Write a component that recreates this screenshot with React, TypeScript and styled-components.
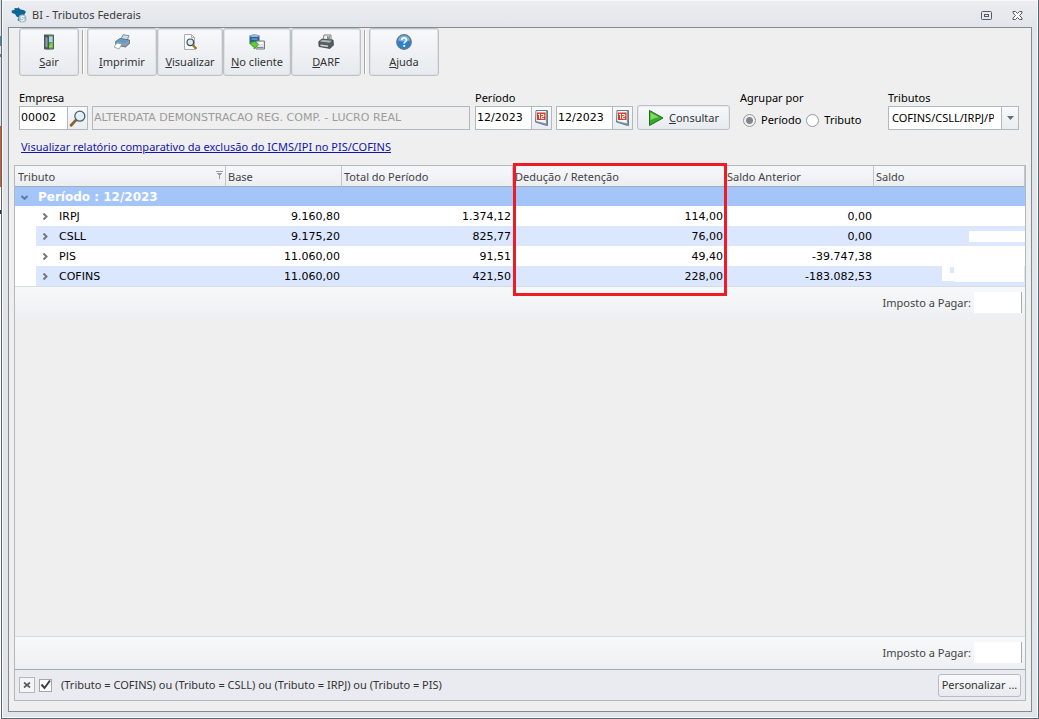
import React from "react";
import styled, { createGlobalStyle } from "styled-components";

const ui = `"Segoe UI", "Noto Sans", "Open Sans", sans-serif`;
const data = `Verdana, "DejaVu Sans", sans-serif`;

const GlobalStyle = createGlobalStyle`
  * { box-sizing: border-box; }
  body { margin: 0; background: #f4f6f7; font: 11px/16px ${ui}; color: #1e1e1e; }
  button, input, select { font: inherit; color: inherit; margin: 0; }
`;

const Desktop = styled.div`
  display: flex;
  min-height: 100vh;
  background: linear-gradient(#dfe3e8 0 36px, #4b90a8 36px 46px, #e4e7ea 46px 54px, #777 54px 57px, #dfe3e8 57px 126px, #d9582b 126px 187px, #ffffff 187px 210px, #333 210px 214px, #fff 214px);
  padding-left: 1px;
`;
const Window = styled.main`
  flex: 1;
  min-width: 0;
  display: flex;
  flex-direction: column;
  border: 1px solid #5d6772;
  border-top: 0;
  box-shadow: inset 0 0 0 1px #f7f9fa;
  background: linear-gradient(#ecedf1, #e1e5e9 28px);
  background-clip: padding-box;
  padding: 0 6px 6px;
`;
const TitleBar = styled.header`
  display: flex;
  align-items: center;
  height: 27px;
  padding: 3px 1px 0 3px;
  gap: 5px;
  color: #3b3b3b;
`;
const Title = styled.h1`
  flex: 1;
  margin: 0;
  font: inherit;
`;
const WindowButton = styled.button`
  display: flex;
  width: 26px;
  padding: 1px 7px 0;
  border: 0;
  background: none;
`;
const Client = styled.div`
  flex: 1;
  display: flex;
  flex-direction: column;
  border: 1px solid #838b93;
  background: #efefef;
`;
const Toolbar = styled.nav`
  display: flex;
  padding-left: 10px;
`;
const ToolButton = styled.button<{ $width: number }>`
  width: ${(p) => p.$width}px;
  height: 48px;
  display: flex;
  flex-direction: column;
  align-items: center;
  justify-content: space-between;
  padding: 5px 0;
  border: 1px solid #bcc1c8;
  border-radius: 3px;
  background: linear-gradient(#f7f9fb, #e7eaee);
  box-shadow: inset 0 0 0 1px #dfe3e7;
  color: #333;
  white-space: nowrap;
`;
const Divider = styled.span`
  width: 2px;
  margin: 2px 3px 2px 3px;
  border-left: 1px solid #a5a5a5;
  border-right: 1px solid #fff;
`;
const Filters = styled.form`
  display: flex;
  align-items: flex-start;
  padding: 14px 12px 0 10px;
`;
const Field = styled.div<{ $grow?: boolean; $width?: number; $end?: number }>`
  flex: ${(p) => (p.$grow ? "1 1 0" : "none")};
  width: ${(p) => (p.$width ? `${p.$width}px` : "auto")};
  min-width: 0;
  margin: 0 ${(p) => p.$end ?? 0}px 0 0;
  padding: 0;
  border: 0;
  color: #000;
`;
const FieldLabel = styled.label`
  display: block;
  height: 16px;
  padding: 0;
`;
const Controls = styled.div<{ $gap: number; $indent?: number }>`
  display: flex;
  gap: ${(p) => p.$gap}px;
  padding-left: ${(p) => p.$indent ?? 0}px;
`;
const InputBox = styled.div<{ $width?: number }>`
  display: flex;
  flex: ${(p) => (p.$width ? "none" : "1")};
  width: ${(p) => (p.$width ? `${p.$width}px` : "auto")};
  height: 24px;
  border: 1px solid #b1b8c0;
  background: #fff;
`;
const TextInput = styled.input`
  flex: 1;
  width: 0;
  min-width: 0;
  border: 0;
  padding: 0 0 0 1px;
  background: transparent;
  font-family: ${data};
  color: #000;
  &:disabled { background: #efefef; color: #9b9b9b; }
`;
const InputButton = styled.button<{ $width: number }>`
  width: ${(p) => p.$width}px;
  display: grid;
  place-items: center;
  padding: 0;
  border: 0;
  border-left: 1px solid #b1b8c0;
  background: linear-gradient(#f7f9fb, #e9edf0);
`;
const QueryButton = styled.button`
  display: flex;
  align-items: center;
  gap: 5px;
  width: 93px;
  height: 25px;
  margin: 15px 10px 0 4px;
  padding: 0 0 0 10px;
  border: 1px solid #bcc1c8;
  border-radius: 3px;
  background: linear-gradient(#f7f9fb, #e7eaee);
  box-shadow: inset 0 0 0 1px #e6eaed;
  color: #333;
`;
const Choice = styled.label`
  display: flex;
  align-items: center;
  gap: 5px;
  margin-top: 6px;
`;
const Radio = styled.input`
  appearance: none;
  width: 13px;
  height: 13px;
  border: 1px solid #9299a1;
  border-radius: 50%;
  background: #fff;
  &:checked { background: radial-gradient(circle, #82868c 0 3px, #eef0f2 4px); }
`;
const SelectBox = styled.div`
  position: relative;
  height: 24px;
`;
const Select = styled.select`
  appearance: none;
  width: 100%;
  height: 24px;
  padding: 0 24px 1px 3px;
  border: 1px solid #b1b8c0;
  border-radius: 0;
  background: #fff;
  color: #000;
`;
const SelectArrow = styled.span`
  position: absolute;
  right: 1px;
  top: 1px;
  bottom: 1px;
  width: 17px;
  display: grid;
  place-items: center;
  border-left: 1px solid #b1b8c0;
  background: linear-gradient(#f7f9fb, #e9edf0);
  pointer-events: none;
`;
const ReportLink = styled.a`
  align-self: flex-start;
  margin: 9px 0 0 12px;
  color: #1414ae;
`;
const Grid = styled.section`
  position: relative;
  flex: 1;
  display: flex;
  flex-direction: column;
  margin: 10px 5px 10px;
  border: 1px solid #b1b8c0;
`;
const Table = styled.table`
  width: 100%;
  table-layout: fixed;
  border-collapse: separate;
  border-spacing: 0;
`;
const HeadCell = styled.th`
  height: 21px;
  padding: 1px 2px 0 3px;
  border-right: 1px solid #c2c6cc;
  border-bottom: 1px solid #a3abb5;
  background: linear-gradient(#f7f8fa, #ebeef1);
  font-weight: 400;
  text-align: left;
  color: #444;
  svg { float: right; margin-top: 2px; }
  & + & { padding-left: 2px; }
`;
const GroupCell = styled.th`
  height: 19px;
  padding: 1px 0 0 6px;
  background: #a3c5fa;
  color: #fff;
  font: 700 12px/16px ${data};
  text-align: left;
  svg { margin-right: 10px; }
`;
const Row = styled.tr<{ $shaded: boolean }>`
  background: ${(p) => (p.$shaded ? `linear-gradient(90deg, #fff 21px, #dae7fe 21px)` : "#fff")};
`;
const NameCell = styled.th`
  height: 20px;
  padding: 1px 0 0 27px;
  font: 400 11px/16px ${data};
  text-align: left;
  color: #000;
  svg { margin-right: 10px; }
`;
const NumberCell = styled.td`
  position: relative;
  padding: 1px 2px 0 0;
  font: 11px/16px ${data};
  text-align: right;
  color: #000;
`;
const Mask = styled.span<{ $top: number; $right: number; $width: number; $height: number }>`
  position: absolute;
  top: ${(p) => p.$top}px;
  right: ${(p) => p.$right}px;
  width: ${(p) => p.$width}px;
  height: ${(p) => p.$height}px;
  background: #fff;
`;
const TotalBar = styled.div`
  display: flex;
  align-items: center;
  justify-content: flex-end;
  gap: 3px;
  height: 33px;
  padding: 0 3px 1px 0;
  border-top: 1px solid #d6dae1;
  background: linear-gradient(#f7f8fa, #edf0f2);
  color: #444;
`;
const TotalValue = styled.output`
  width: 48px;
  height: 21px;
  border-right: 1px solid #a3abb5;
  background: #fff;
`;
const Space = styled.div`
  flex: 1;
`;
const FilterBar = styled.footer`
  display: flex;
  align-items: center;
  height: 31px;
  padding: 0 4px;
  border-top: 1px solid #a3abb5;
  background: #e9ebf0;
  color: #333;
`;
const ClearButton = styled.button`
  width: 16px;
  height: 16px;
  display: grid;
  place-items: center;
  padding: 0;
  border: 1px solid #b1b8c0;
  background: #f3f5f7;
`;
const FilterToggle = styled.label`
  flex: 1;
  display: flex;
  align-items: center;
  gap: 9px;
  margin-left: 4px;
`;
const Check = styled.span`
  position: relative;
  width: 13px;
  height: 13px;
  svg { position: absolute; left: 0; top: -1px; pointer-events: none; }
`;
const CheckInput = styled.input`
  appearance: none;
  display: block;
  width: 13px;
  height: 13px;
  border: 1px solid #9ea6af;
  background: #fff;
`;
const CustomizeButton = styled.button`
  width: 83px;
  height: 23px;
  padding: 0;
  border: 1px solid #b7bcc4;
  border-radius: 3px;
  background: linear-gradient(#f9fafc, #e7ebee);
  white-space: nowrap;
`;
const Highlight = styled.div`
  position: absolute;
  left: 498px;
  top: -3px;
  width: 214px;
  height: 133px;
  border: 3px solid #ee1c24;
  pointer-events: none;
`;

const Icon = ({ size = 16, children }: { size?: number; children: React.ReactNode }) => (
  <svg width={size} height={size} viewBox="0 0 16 16" fill="none" aria-hidden="true">{children}</svg>
);
const BrazilIcon = () => (
  <Icon>
    <path d="M.5 3.500L3.500 3V1l3 .3 1-1 1.500 2 4 1 2 1.500-1.500 2.500v2.500l-3 1.500-2 3.200-2-1.500 1-2.500-2-1-1.500-2.500-3-1z" fill="#0c6594" />
    <circle cx="11.500" cy="11.500" r="4" fill="#a3bccb" />
    <path d="M13.300 10c-1-1-3.300-1-3.300.4s3.200.8 3.200 2.200-2.200 1.500-3.400.4" stroke="#edf5fa" strokeWidth="1.200" />
  </Icon>
);
const DoorIcon = () => (
  <Icon>
    <path d="M3.500 1h9v14h-9z" fill="#55ab48" stroke="#55595d" />
    <path d="M8 2.500h3.500V8H8z" fill="#a7d9e9" />
    <path d="M8 12l3.500-4v5.500H8z" fill="#8fd24d" />
    <path d="M3 .5l5 1.500v13.500L3 14.500z" fill="#4b555c" />
    <path d="M4.500 3l2 .6v9.800l-2-.5z" fill="#93a0a7" />
  </Icon>
);
const PrinterIcon = () => (
  <Icon>
    <path d="M7 5l2-4.300 6 1-2 5z" fill="#c9deee" stroke="#65798a" strokeWidth=".8" />
    <path d="M1.500 7.500L6 4.500l9.500 1.500v3.500l-4 3.500-9.500-2z" fill="#8f9ba8" stroke="#56636f" strokeWidth=".8" />
    <path d="M2.500 7.500l4-2 7 1.200-3.500 2.500z" fill="#4fa0de" />
    <path d="M3 9l5 1-3 5-5-2z" fill="#fff" stroke="#8a98a6" strokeWidth=".8" />
  </Icon>
);
const PreviewIcon = () => (
  <Icon>
    <path d="M2.500.5h7l3 3v12h-10z" fill="#fff" stroke="#a7adb3" />
    <path d="M9.500.5v3h3" stroke="#a7adb3" />
    <path d="M10.800 11.200l3.700 3.700" stroke="#b17323" strokeWidth="2.200" />
    <circle cx="8.300" cy="8.300" r="3.300" fill="#d5edf5" stroke="#424c55" strokeWidth="1.200" />
  </Icon>
);
const ClientIcon = () => (
  <Icon>
    <path d="M.5 1.500q5-2 10 0V10q-5 1.500-10 0z" fill="#2c5f94" />
    <path d="M1 1.500q4.500-1.700 9 0v1q-4.500 1-9 0z" fill="#9cb8d4" />
    <path d="M2.500 4.200h6v1.800h-6z" fill="#5594ce" />
    <path d="M7 7h8.500v8H7z" fill="#dfe3e6" stroke="#737c83" />
    <path d="M10 9h4" stroke="#fff" strokeWidth="2" />
    <path d="M8 13.500h6.500" stroke="#838b91" />
    <path d="M1.500 8H5V6.500L9.500 10.800 5 15v-2.500C3 12.500 1.500 11 1.500 8z" fill="#5dce33" stroke="#2c8820" strokeWidth=".7" />
  </Icon>
);
const TaxPrinterIcon = () => (
  <Icon>
    <path d="M5 6l1-5h7v6z" fill="#f7f5e8" stroke="#5e6265" strokeWidth=".8" />
    <path d="M9 2h3v3H9z" fill="#5c9ac9" />
    <path d="M10 2h1.500v1.500H10z" fill="#e4ad46" />
    <path d="M.8 7.500L4 5l11 1 .5 5-3.500 3.500-11-2z" fill="#555c62" stroke="#32373b" strokeWidth=".7" />
    <path d="M1.500 7.500L4.500 5.800l9.500 1-2.500 2z" fill="#aeb3b7" />
    <path d="M2.500 10.500l7.500 1v1.500l-7.500-1z" fill="#d5d8db" />
  </Icon>
);
const HelpIcon = () => (
  <Icon>
    <circle cx="8" cy="8" r="7.300" fill="#2f80c4" stroke="#6e7880" strokeWidth="1.200" />
    <path d="M2 6.500a6 5 0 0112 0q-6 2-12 0z" fill="#75b1df" />
    <path d="M5.800 6.200c0-3 4.700-2.900 4.700-.2 0 1.700-2.300 1.600-2.300 3.500" stroke="#fff" strokeWidth="1.700" />
    <path d="M7.300 10.900h1.900v1.900H7.300z" fill="#fff" />
  </Icon>
);
const SearchIcon = () => (
  <Icon size={17}>
    <path d="M6.500 9.500L2 14.300" stroke="#8f6026" strokeWidth="2.600" strokeLinecap="round" />
    <circle cx="10.200" cy="5.800" r="4.700" fill="#dbf0fa" stroke="#4e5b68" strokeWidth="1.200" />
    <path d="M7.500 5.500c.3-2 1.700-2.700 3.200-2.500" stroke="#fff" strokeWidth="1.300" />
  </Icon>
);
const CalendarIcon = () => (
  <svg width="13" height="16" viewBox="0 0 13 16" fill="none" aria-hidden="true">
    <path d="M1 .5h11.500v15L10 15 .5 12z" fill="#8799aa" stroke="#677a8d" />
    <path d="M1.500 1h9.300v12.300L1.200 11z" fill="#f5f7fa" />
    <path d="M2 2.500h8.500V10H2z" fill="#d63d29" />
    <path d="M3 4.800l1.500-.8v4.800M6 4.500h2.800v1.900H6.500v2H9" stroke="#fff" />
  </svg>
);
const PlayIcon = () => (
  <Icon>
    <path d="M1.500.5L15 8 1.500 15.500z" fill="#39a824" stroke="#1f6f19" />
    <path d="M2.500 2.500L11 7.200q-5 .5-8.500 3z" fill="#83d963" />
  </Icon>
);
const Chevron = ({ open = false }: { open?: boolean }) => (
  <svg width="7" height="7" viewBox="0 0 7 7" fill="none" aria-hidden="true">
    <path d={open ? "M0.500 2l3 2.800L6.500 2" : "M1.500 .5l3 3L1.500 6.500"} stroke={open ? "#65799a" : "#74787e"} strokeWidth="2" />
  </svg>
);

const tools = [
  { key: "S", rest: "air", width: 60, icon: <DoorIcon />, divided: true },
  { key: "I", rest: "mprimir", width: 70, icon: <PrinterIcon /> },
  { key: "V", rest: "isualizar", width: 66, icon: <PreviewIcon /> },
  { key: "N", rest: "o cliente", width: 68, icon: <ClientIcon /> },
  { key: "D", rest: "ARF", width: 70, icon: <TaxPrinterIcon />, divided: true },
  { key: "A", rest: "juda", width: 70, icon: <HelpIcon /> },
];

const rows = [
  { name: "IRPJ", values: ["9.160,80", "1.374,12", "114,00", "0,00"] },
  { name: "CSLL", values: ["9.175,20", "825,77", "76,00", "0,00"] },
  { name: "PIS", values: ["11.060,00", "91,51", "49,40", "-39.747,38"] },
  { name: "COFINS", values: ["11.060,00", "421,50", "228,00", "-183.082,53"] },
];

const masks: Record<string, React.ReactNode> = {
  CSLL: <Mask $top={5} $right={0} $width={56} $height={11} />,
  COFINS: (
    <>
      <Mask $top={0} $right={75} $width={8} $height={15} />
      <Mask $top={7} $right={71} $width={4} $height={8} />
      <Mask $top={0} $right={71} $width={4} $height={1} />
      <Mask $top={0} $right={1} $width={70} $height={16} />
    </>
  ),
};

const MonthInput = ({ id, label }: { id: string; label: string }) => (
  <InputBox $width={77}>
    <TextInput id={id} aria-label={label} defaultValue="12/2023" />
    <InputButton type="button" $width={20} aria-label="Abrir calendário"><CalendarIcon /></InputButton>
  </InputBox>
);

const Total = () => (
  <TotalBar>
    <span>Imposto a Pagar:</span>
    <TotalValue />
  </TotalBar>
);

export default function App() {
  return (
    <Desktop>
      <GlobalStyle />
      <Window>
        <TitleBar>
          <BrazilIcon />
          <Title>BI - Tributos Federais</Title>
          <WindowButton aria-label="Maximizar">
            <svg width="12" height="10" viewBox="0 0 12 10" fill="none">
              <rect x=".5" y=".5" width="10" height="8" rx="1" stroke="#535c64" />
              <rect x="3.500" y="3.500" width="4" height="2" stroke="#535c64" />
            </svg>
          </WindowButton>
          <WindowButton aria-label="Fechar">
            <svg width="12" height="10" viewBox="0 0 12 10" fill="none">
              <path d="M1 .5h2.500l2 2 2-2H10V2L7.500 4.500 10 7v1.500H7.500l-2-2-2 2H1V7l2.500-2.500L1 2z" fill="#fff" stroke="#535c64" />
            </svg>
          </WindowButton>
        </TitleBar>
        <Client>
          <Toolbar>
            {tools.map((t) => (
              <React.Fragment key={t.key}>
                <ToolButton $width={t.width}>
                  {t.icon}
                  <span><u>{t.key}</u>{t.rest}</span>
                </ToolButton>
                {t.divided && <Divider />}
              </React.Fragment>
            ))}
          </Toolbar>
          <Filters onSubmit={(e) => e.preventDefault()}>
            <Field $grow $end={5}>
              <FieldLabel htmlFor="empresa">Empresa</FieldLabel>
              <Controls $gap={4}>
                <InputBox $width={69}>
                  <TextInput id="empresa" defaultValue="00002" />
                  <InputButton type="button" $width={20} aria-label="Pesquisar empresa"><SearchIcon /></InputButton>
                </InputBox>
                <InputBox>
                  <TextInput disabled aria-label="Nome da empresa" defaultValue="ALTERDATA DEMONSTRACAO REG. COMP. - LUCRO REAL" />
                </InputBox>
              </Controls>
            </Field>
            <Field>
              <FieldLabel htmlFor="inicio">Período</FieldLabel>
              <Controls $gap={4}>
                <MonthInput id="inicio" label="Período inicial" />
                <MonthInput id="fim" label="Período final" />
              </Controls>
            </Field>
            <QueryButton type="submit">
              <PlayIcon />
              <span><u>C</u>onsultar</span>
            </QueryButton>
            <Field as="fieldset" $width={148}>
              <FieldLabel as="legend">Agrupar por</FieldLabel>
              <Controls $gap={5} $indent={3}>
                <Choice><Radio type="radio" name="agrupar" defaultChecked />Período</Choice>
                <Choice><Radio type="radio" name="agrupar" />Tributo</Choice>
              </Controls>
            </Field>
            <Field $width={131}>
              <FieldLabel htmlFor="tributos">Tributos</FieldLabel>
              <SelectBox>
                <Select id="tributos"><option>COFINS/CSLL/IRPJ/PIS</option></Select>
                <SelectArrow><svg width="7" height="4" viewBox="0 0 7 4"><path d="M0 0h7L3.500 4z" fill="#666e77" /></svg></SelectArrow>
              </SelectBox>
            </Field>
          </Filters>
          <ReportLink href="#relatorio">Visualizar relatório comparativo da exclusão do ICMS/IPI no PIS/COFINS</ReportLink>
          <Grid>
            <Table>
              <colgroup>
                <col style={{ width: 211 }} />
                <col style={{ width: 116 }} />
                <col style={{ width: 171 }} />
                <col style={{ width: 212 }} />
                <col style={{ width: 149 }} />
                <col />
              </colgroup>
              <thead>
                <tr>
                  <HeadCell>
                    Tributo
                    <svg width="7" height="8" viewBox="0 0 7 8" fill="none"><path d="M0 .5h7M1 2.500h5M2 3.500h3M3.500 3.500V8" stroke="#939ba4" /></svg>
                  </HeadCell>
                  <HeadCell>Base</HeadCell>
                  <HeadCell>Total do Período</HeadCell>
                  <HeadCell>Dedução / Retenção</HeadCell>
                  <HeadCell>Saldo Anterior</HeadCell>
                  <HeadCell>Saldo</HeadCell>
                </tr>
              </thead>
              <tbody>
                <tr><GroupCell colSpan={6}><Chevron open />Período : 12/2023</GroupCell></tr>
                {rows.map((r, i) => (
                  <Row key={r.name} $shaded={i % 2 === 1}>
                    <NameCell scope="row"><Chevron />{r.name}</NameCell>
                    {r.values.map((v, n) => <NumberCell key={n}>{v}</NumberCell>)}
                    <NumberCell>{masks[r.name]}</NumberCell>
                  </Row>
                ))}
              </tbody>
            </Table>
            <Total />
            <Space />
            <Total />
            <FilterBar>
              <ClearButton aria-label="Limpar filtro">
                <svg width="8" height="6" viewBox="0 0 8 6"><path d="M1 .5l6 5M7 .5l-6 5" stroke="#555b61" strokeWidth="1.700" /></svg>
              </ClearButton>
              <FilterToggle>
                <Check>
                  <CheckInput type="checkbox" defaultChecked />
                  <svg width="13" height="13" viewBox="0 0 13 13" fill="none"><path d="M2.500 6.500L5.500 10 11 2.500" stroke="#3b3f43" strokeWidth="2" /></svg>
                </Check>
                (Tributo = COFINS) ou (Tributo = CSLL) ou (Tributo = IRPJ) ou (Tributo = PIS)
              </FilterToggle>
              <CustomizeButton>Personalizar ...</CustomizeButton>
            </FilterBar>
            <Highlight />
          </Grid>
        </Client>
      </Window>
    </Desktop>
  );
}
